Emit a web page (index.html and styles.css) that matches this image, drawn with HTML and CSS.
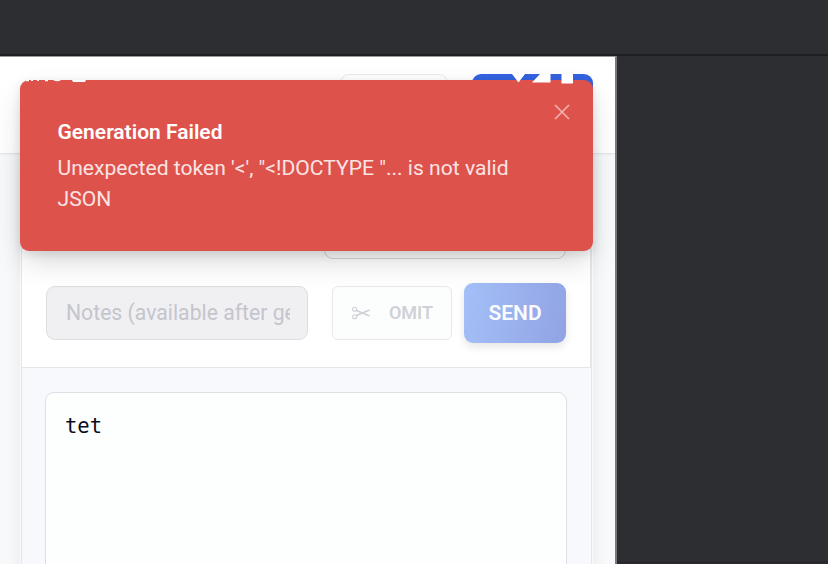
FILE: index.html
```html
<!DOCTYPE html>
<html lang="en">
<head>
<meta charset="utf-8">
<title>Generation</title>
<link rel="stylesheet" href="styles.css">
</head>
<body>
<div class="topbar"></div>
<div class="stage">
  <main class="device">
    <header class="header">
      <div class="outline-button"></div>
      <div class="primary-button"></div>
    </header>
    <section class="panel">
      <div class="toolbar">
        <div class="select"></div>
        <div class="actions">
          <div class="notes"><span>Notes (available after generation)</span></div>
          <button class="omit"><svg class="scissors" viewBox="0 0 20 14" width="20" height="14"><circle cx="3.6" cy="3.2" r="2"/><circle cx="3.6" cy="10.8" r="2"/><path d="M5 4.3L18.5 10M5 9.7L18.5 4"/></svg><span>OMIT</span></button>
          <button class="send">SEND</button>
        </div>
      </div>
      <div class="editor-area"><div class="editor">tet</div></div>
    </section>
    <aside class="toast">
      <svg class="remnants" viewBox="0 0 573 10" width="573" height="10"><path d="M6 6h3v1.3H6zM11 6h2v1h-2zM17 6h2v1h-2zM25 6h3v1.2h-3zM33 6h8q-3 2.5-8 0zM52 6h14l-1 2H53z"/><path d="M492 0H505L498.5 8.5ZM520 0H530.5V8.5H512ZM541.5 0H553V9.5H541.5Z"/></svg>
      <svg class="close" viewBox="0 0 16 16" width="16" height="16"><path d="M1 1L15 15M15 1L1 15"/></svg>
      <h2>Generation Failed</h2>
      <p>Unexpected token '&lt;', "&lt;!DOCTYPE "... is not valid JSON</p>
    </aside>
  </main>
</div>
</body>
</html>
```
FILE: styles.css
```css
* { box-sizing: border-box; }
body { margin: 0; height: 564px; overflow: hidden; background: #2d2e32; font-family: Roboto, sans-serif; }
.topbar { height: 56px; border-bottom: 2px solid #1e1f22; }
.stage { height: 508px; }
.device { position: relative; width: 617px; height: 508px; overflow: hidden; background: #f8f9fb; border-top: 1px solid #999; border-right: 2px solid #77797b; }
.stage { background: linear-gradient(#2c272d, #2c272d) bottom / 100% 3px no-repeat; }
.header { height: 97px; padding: 17px 22px 0 0; background: #fff; border-bottom: 1px solid #e6e7ea; box-shadow: 0 1px 2px #0000000a; display: flex; justify-content: flex-end; gap: 24px; }
.outline-button { width: 108px; height: 48px; border: 1px solid #e7e9ef; border-radius: 9px; }
.primary-button { width: 121px; height: 48px; border-radius: 9px; background: #3563e0; }
.panel { width: 571px; height: 430px; margin-left: 21px; background: #f8f9fc; border: 1px solid #e5e6ea; border-top: 0; box-shadow: 0 0 0 1px #fafafc, 0 0 16px #00000014; }
.toolbar { height: 214px; padding: 44px 24px 0 25px; background: #fff; border-bottom: 1px solid #e5e6ea; border-right: 1px solid #e5e6ea; }
.select { width: 242px; height: 61px; margin-left: auto; border: 1px solid #d5d6dc; border-radius: 9px; }
.actions { display: flex; align-items: center; height: 60px; margin-top: 24px; margin-left: -1px; }
.notes { flex: 0 0 262px; width: 262px; min-width: 0; height: 54px; margin-right: 24px; padding: 0 17px 0 19px; border: 1.5px solid #dddee2; border-radius: 9px; background: #f0f0f3; color: #c4c5cc; font-size: 21.2px; line-height: 52px; }
.notes span { display: block; overflow: hidden; white-space: nowrap; }
button { font-family: inherit; padding: 0; }
.omit { flex: 0 0 120px; height: 54px; margin-right: 12px; display: flex; align-items: center; justify-content: center; gap: 18px; border: 1px solid #e6e8eb; border-radius: 6px; background: #fcfefd; color: #d0d1d7; font-size: 18px; font-weight: 600; }
.omit span { position: relative; top: -1px; }
.scissors { flex: none; fill: none; stroke: #cfd0d6; stroke-width: 1.7; }
.scissors circle { stroke-width: 1.1; }
.send { flex: 0 0 102px; height: 60px; border: 0; border-radius: 9px; background: linear-gradient(100deg, #a4c0f8, #91a3e4); color: #fafbfe; font-size: 21px; font-weight: 600; box-shadow: 0 4px 9px #0000001a; }
.editor-area { padding: 24px 23px 0; }
.editor { width: 522px; height: 200px; padding: 20px 19px; border: 1.5px solid #dddfe4; border-radius: 9px; background: #fdfefe; color: #080b1c; font: 20.5px/26px "DejaVu Sans Mono", monospace; }
.toast { position: absolute; left: 20px; top: 23px; width: 573px; height: 171px; padding: 37px 38px 0 37.5px; border-radius: 9px; background: #de524c; box-shadow: 0 12px 30px -4px #0000002e, 0 3px 10px #00000018; }
.toast h2 { margin: 0; color: #fff; font-size: 21px; line-height: 30px; font-weight: 600; }
.toast p { margin: 5px 0 0; color: #fae4e3; font-size: 21.1px; line-height: 31px; }
.close { position: absolute; right: 23px; top: 24px; fill: none; stroke: #f2b3b0; stroke-width: 1.6; }
.remnants { position: absolute; left: 0; top: -6px; fill: #fff; }
```
